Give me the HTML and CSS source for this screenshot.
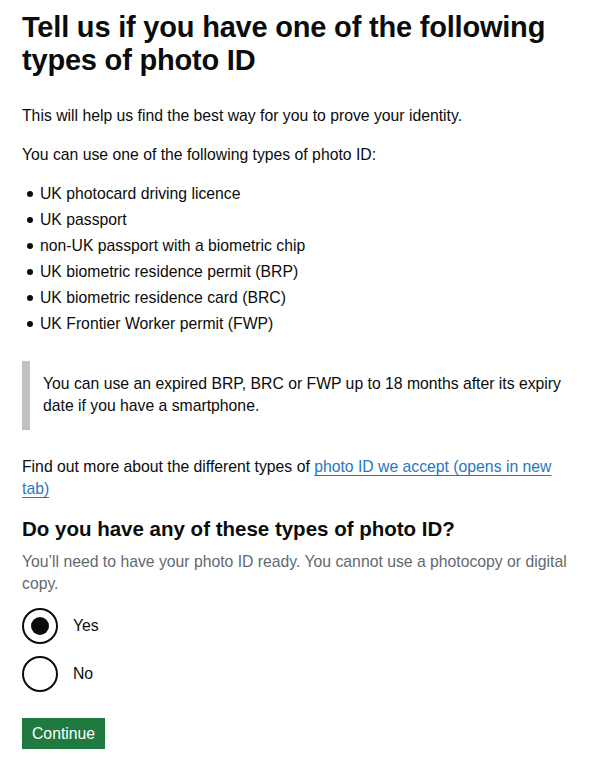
FILE: index.html
```html
<!DOCTYPE html>
<html lang="en">
<head>
<meta charset="utf-8">
<title>Tell us if you have one of the following types of photo ID</title>
<link rel="stylesheet" href="styles.css">
</head>
<body>
<main class="page">
  <h1 class="heading-xl">Tell us if you have one of the following types of photo ID</h1>
  <p class="body p-first">This will help us find the best way for you to prove your identity.</p>
  <p class="body">You can use one of the following types of photo ID:</p>
  <ul class="list">
    <li>UK photocard driving licence</li>
    <li>UK passport</li>
    <li>non-UK passport with a biometric chip</li>
    <li>UK biometric residence permit (BRP)</li>
    <li>UK biometric residence card (BRC)</li>
    <li>UK Frontier Worker permit (FWP)</li>
  </ul>
  <div class="inset">You can use an expired BRP, BRC or FWP up to 18 months after its expiry date if you have a smartphone.</div>
  <p class="body find">Find out more about the different types of <a class="link" href="#">photo ID we accept (opens in new tab)</a></p>
  <form class="form">
    <fieldset class="fieldset">
      <legend class="heading-m">Do you have any of these types of photo ID?</legend>
      <div class="hint">You’ll need to have your photo ID ready. You cannot use a photocopy or digital copy.</div>
      <div class="radios">
        <label class="radio"><input type="radio" name="id" checked><span class="radio-mark"></span><span class="radio-label">Yes</span></label>
        <label class="radio"><input type="radio" name="id"><span class="radio-mark"></span><span class="radio-label">No</span></label>
      </div>
    </fieldset>
    <button type="button" class="button">Continue</button>
  </form>
</main>
</body>
</html>
```
FILE: styles.css
```css
* { box-sizing: border-box; }
html, body { margin: 0; padding: 0; background: #ffffff; }
body {
  font-family: "Liberation Sans", Arial, sans-serif;
  color: #0b0c0c;
}
.page {
  padding: 11px 22px 0 22px;
}
.heading-xl {
  font-size: 29px;
  line-height: 33px;
  font-weight: 700;
  margin: 0 0 28px 0;
  letter-spacing: -0.2px;
}
.body {
  font-size: 15.75px;
  line-height: 22px;
  margin: 0 0 17px 0;
}
.list {
  list-style: none;
  margin: 0 0 26px 0;
  padding: 0 0 0 18px;
  font-size: 15.75px;
  line-height: 22px;
}
.list li {
  position: relative;
  margin-bottom: 4px;
}
.list li::before {
  content: "";
  position: absolute;
  left: -13px;
  top: 8px;
  width: 6px;
  height: 6px;
  border-radius: 50%;
  background: #0b0c0c;
}
.inset {
  border-left: 8px solid #bfc1c3;
  padding: 12px 0 13px 13px;
  font-size: 15.75px;
  line-height: 22px;
  margin: 0 0 26px 0;
}
.find { margin-bottom: 17px; }
.link {
  color: #2a76c0;
  text-decoration: underline;
  text-underline-offset: 3px;
  text-decoration-thickness: 1px;
}
.form { margin: 0; }
.fieldset {
  border: 0;
  margin: 0;
  padding: 0;
  min-width: 0;
}
.heading-m {
  font-size: 20.5px;
  line-height: 24px;
  font-weight: 700;
  padding: 0;
  margin: 0 0 10px 0;
}
.hint {
  color: #626a6e;
  font-size: 15.75px;
  line-height: 22px;
  margin-bottom: 13px;
}
.radios {
  display: flex;
  flex-direction: column;
  gap: 12px;
}
.radio {
  display: flex;
  align-items: center;
  gap: 15px;
  font-size: 15.75px;
  line-height: 22px;
  cursor: pointer;
}
.radio input {
  position: absolute;
  opacity: 0;
  width: 0;
  height: 0;
  margin: 0;
}
.radio-mark {
  width: 36px;
  height: 36px;
  border: 2px solid #0b0c0c;
  border-radius: 50%;
  display: flex;
  align-items: center;
  justify-content: center;
  flex: none;
}
.radio input:checked + .radio-mark::after {
  content: "";
  width: 18px;
  height: 18px;
  border-radius: 50%;
  background: #0b0c0c;
}
.button {
  margin-top: 26px;
  font-family: inherit;
  font-size: 15.75px;
  line-height: 20px;
  color: #ffffff;
  background: #1f7a40;
  border: 0;
  border-radius: 0;
  padding: 6px 10px 5px 10px;
  box-shadow: 0 2px 0 #0f3d20;
  cursor: pointer;
}
```
